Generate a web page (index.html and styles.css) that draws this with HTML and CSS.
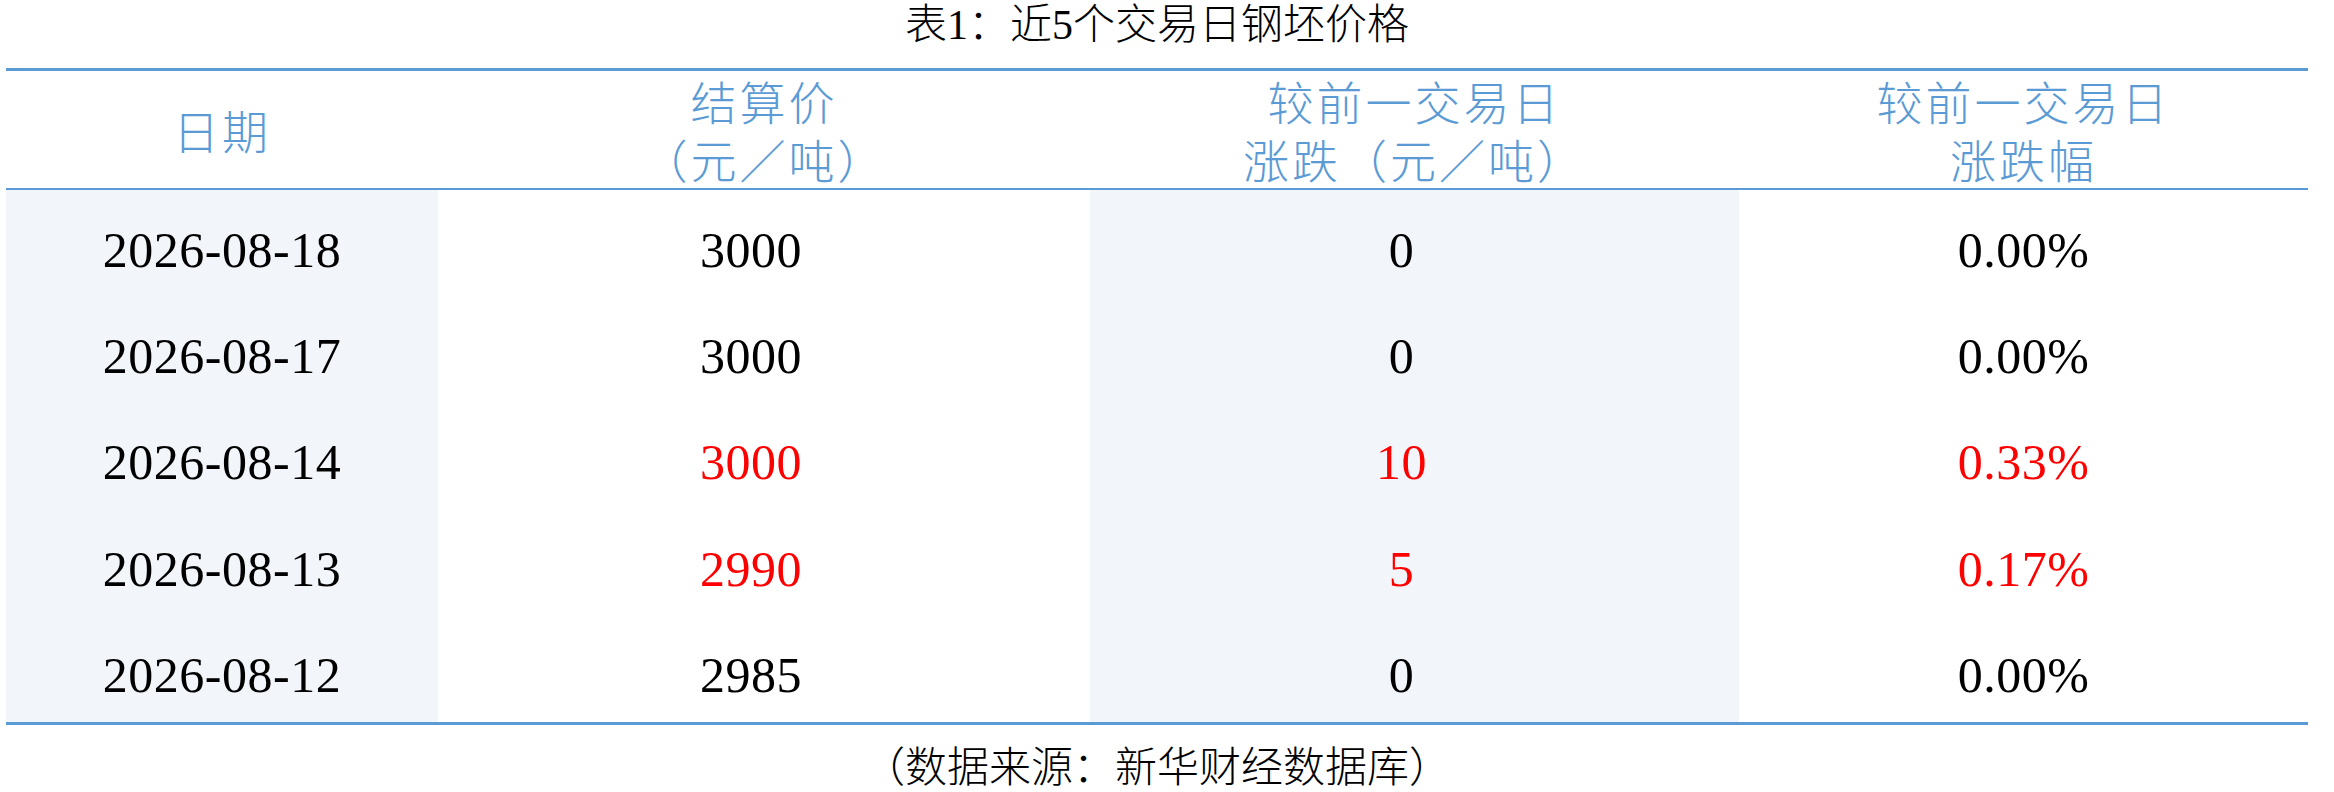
FILE: index.html
```html
<!DOCTYPE html>
<html lang="zh-CN">
<head>
<meta charset="utf-8">
<title>近5个交易日钢坯价格</title>
<link rel="stylesheet" href="styles.css">
</head>
<body>
<div class="wrap">
  <div class="title">表1：近5个交易日钢坯价格</div>
  <div class="table">
    <div class="th">日期</div>
    <div class="th">结算价<br>（元／吨）</div>
    <div class="th">较前一交易日<br>涨跌（元／吨）</div>
    <div class="th">较前一交易日<br>涨跌幅</div>

    <div class="td shade">2026-08-18</div>
    <div class="td mid">3000</div>
    <div class="td mid shade">0</div>
    <div class="td">0.00%</div>

    <div class="td shade">2026-08-17</div>
    <div class="td mid">3000</div>
    <div class="td mid shade">0</div>
    <div class="td">0.00%</div>

    <div class="td shade">2026-08-14</div>
    <div class="td mid up">3000</div>
    <div class="td mid shade up">10</div>
    <div class="td up">0.33%</div>

    <div class="td shade">2026-08-13</div>
    <div class="td mid up">2990</div>
    <div class="td mid shade up">5</div>
    <div class="td up">0.17%</div>

    <div class="td shade">2026-08-12</div>
    <div class="td mid">2985</div>
    <div class="td mid shade">0</div>
    <div class="td">0.00%</div>
  </div>
  <div class="source">（数据来源：新华财经数据库）</div>
</div>
</body>
</html>
```

FILE: styles.css
```css
html, body {
  margin: 0;
  padding: 0;
  background: #ffffff;
}

body {
  font-family: "Liberation Serif", "Noto Sans CJK SC", serif;
  font-weight: 300;
  color: #000000;
}

.wrap {
  width: 2302px;
  margin-left: 6px;
}

.title {
  height: 68px;
  font-size: 42px;
  line-height: 50px;
  text-align: center;
}

.table {
  display: grid;
  grid-template-columns: 432px 652px 649px 569px;
  border-top: 3px solid #5b9bd5;
  border-bottom: 3px solid #5b9bd5;
}

.th {
  height: 119px;
  box-sizing: border-box;
  padding-top: 8px;
  display: flex;
  align-items: center;
  justify-content: center;
  text-align: center;
  font-size: 46px;
  line-height: 58px;
  letter-spacing: 3px;
  color: #5b9bd5;
  border-bottom: 2px solid #5b9bd5;
}

.td {
  height: 106.4px;
  box-sizing: border-box;
  padding-top: 13px;
  display: flex;
  align-items: center;
  justify-content: center;
  font-size: 50px;
  letter-spacing: 0.5px;
}

.mid {
  padding-right: 26px;
}

.shade {
  background: #f2f5fa;
}

.up {
  color: #ff0000;
}

.source {
  margin-top: 18px;
  font-size: 42px;
  line-height: 50px;
  text-align: center;
}
```
